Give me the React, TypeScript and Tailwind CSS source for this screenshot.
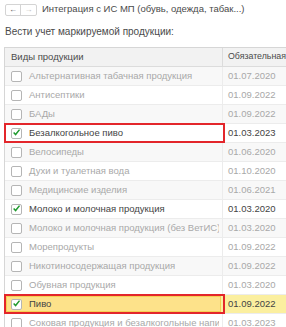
import React from "react";

type Row = { name: string; date: string; checked: boolean };

const rows: Row[] = [
  { name: "Альтернативная табачная продукция", date: "01.07.2020", checked: false },
  { name: "Антисептики", date: "01.09.2022", checked: false },
  { name: "БАДы", date: "01.09.2022", checked: false },
  { name: "Безалкогольное пиво", date: "01.03.2023", checked: true },
  { name: "Велосипеды", date: "01.06.2020", checked: false },
  { name: "Духи и туалетная вода", date: "01.10.2020", checked: false },
  { name: "Медицинские изделия", date: "01.06.2021", checked: false },
  { name: "Молоко и молочная продукция", date: "01.03.2020", checked: true },
  { name: "Молоко и молочная продукция (без ВетИС)", date: "01.03.2020", checked: false },
  { name: "Морепродукты", date: "01.09.2022", checked: false },
  { name: "Никотиносодержащая продукция", date: "01.09.2022", checked: false },
  { name: "Обувная продукция", date: "01.03.2020", checked: false },
  { name: "Пиво", date: "01.09.2022", checked: true },
  { name: "Соковая продукция и безалкогольные напитки", date: "01.03.2023", checked: false },
];

const Check: React.FC<{ on: boolean }> = ({ on }) => (
  <div className="w-[11px] h-[11px] shrink-0 rounded-[2px] border border-[#b5b5b5] bg-white flex items-center justify-center">
    {on && (
      <svg width="11" height="11" viewBox="0 0 11 11" className="-mt-[1px]">
        <path d="M2 5.5 L4.4 8 L9.2 2" fill="none" stroke="#1f9a2e" strokeWidth="1.8" />
      </svg>
    )}
  </div>
);

export default function App() {
  return (
    <div
      className="w-[286px] h-[327px] overflow-hidden bg-white text-[#333]"
      style={{ fontFamily: '"Liberation Sans", Arial, sans-serif' }}
    >
      {/* title bar */}
      <div className="flex items-center h-[18px] pl-[5px] pt-[1px]">
        <div className="flex h-[12px] border border-[#d4d4d4] rounded-[2px]">
          <div className="w-[15px] flex items-center justify-center text-[8px] text-[#555] border-r border-[#d4d4d4] leading-none">←</div>
          <div className="w-[15px] flex items-center justify-center text-[8px] text-[#bbb] leading-none">→</div>
        </div>
        <span className="ml-[5px] text-[9.5px] text-[#4a4a4a]">Интеграция с ИС МП (обувь, одежда, табак...)</span>
      </div>

      <div className="pl-[5px] mt-[7px] text-[10px] text-[#4a4a4a] h-[14px] leading-[14px]">
        Вести учет маркируемой продукции:
      </div>

      {/* table */}
      <div className="mt-[8px] ml-[4px] w-[300px] border-l border-t border-[#d6d6d6]">
        <div className="flex h-[19px] bg-[#f2f2f2] border-b border-[#dcdcdc] text-[9.5px] text-[#4a4a4a]">
          <div className="w-[218px] pl-[6px] flex items-center border-r border-[#dcdcdc]">Виды продукции</div>
          <div className="flex-1 pl-[5px] flex items-center whitespace-nowrap text-[8.8px]">Обязательная</div>
        </div>
        {rows.map((r, i) => {
          const boxed = r.name === "Безалкогольное пиво" || r.name === "Пиво";
          const current = r.name === "Пиво";
          const bg = current ? "bg-[#fbef9f]" : i % 2 === 0 ? "bg-[#f8f8f8]" : "bg-white";
          const txt = r.checked ? "text-[#444]" : "text-[#a8a8a8]";
          return (
            <div key={i} className={`flex h-[19px] border-b border-[#ececec] text-[9.5px] ${bg} ${txt}`}>
              <div
                className={`w-[218px] shrink-0 relative flex items-center pl-[6px] ${
                  boxed ? "" : "border-r border-[#ececec]"
                }`}
              >
                {boxed && (
                  <div className="absolute -left-[1px] -top-[1px] w-[221px] h-[20px] border-2 border-[#e3262b]" />
                )}
                {current && (
                  <div className="absolute left-[1px] top-[1px] w-[215px] h-[16px] bg-[#fde28a] border border-[#f5cf55]" />
                )}
                <div className="relative flex items-center gap-[7px] w-[208px] overflow-hidden">
                  <Check on={r.checked} />
                  <span className="whitespace-nowrap">{r.name}</span>
                </div>
              </div>
              <div className="flex-1 pl-[5px] flex items-center whitespace-nowrap">{r.date}</div>
            </div>
          );
        })}
      </div>
    </div>
  );
}
